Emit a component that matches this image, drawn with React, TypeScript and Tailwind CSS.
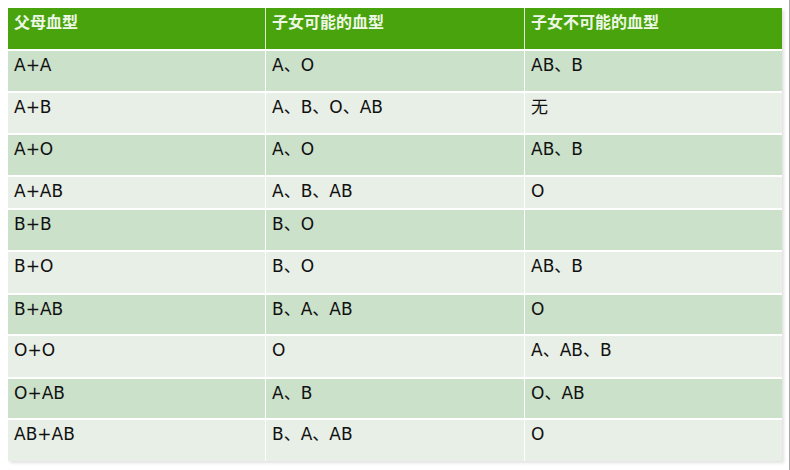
import React from 'react';

// Blood type inheritance table
const rows: [string, string, string][] = [
  ['A+A', 'A、O', 'AB、B'],
  ['A+B', 'A、B、O、AB', '无'],
  ['A+O', 'A、O', 'AB、B'],
  ['A+AB', 'A、B、AB', 'O'],
  ['B+B', 'B、O', ''],
  ['B+O', 'B、O', 'AB、B'],
  ['B+AB', 'B、A、AB', 'O'],
  ['O+O', 'O', 'A、AB、B'],
  ['O+AB', 'A、B', 'O、AB'],
  ['AB+AB', 'B、A、AB', 'O'],
];

const rowHeights = ['h-[40px]', 'h-[40px]', 'h-[40px]', 'h-[31px]', 'h-[40px]', 'h-[41px]', 'h-[39px]', 'h-[41px]', 'h-[39px]', 'h-[41px]'];

const App: React.FC = () => {
  return (
    <div className="w-[790px] h-[470px] bg-white border-r border-[#a8a8a8] pt-2 pl-2">
      <div className="w-[774px] flex flex-col gap-[2px] shadow-[2px_2px_3px_rgba(0,0,0,0.12)]">
        {/* Header */}
        <div className="grid grid-cols-[257px_258px_257px] gap-x-[1px] h-[41px] bg-[#dfe9da]">
          {['父母血型', '子女可能的血型', '子女不可能的血型'].map((h) => (
            <div key={h} className="bg-[#48a30c] text-[#eef7e6] text-[16px] leading-[20px] font-semibold pl-[6px] pt-[3px] font-['Noto_Sans_CJK_SC',sans-serif]">
              {h}
            </div>
          ))}
        </div>
        {rows.map((r, i) => (
          <div key={r[0]} className={`grid grid-cols-[257px_258px_257px] gap-x-[1px] bg-white ${rowHeights[i]}`}>
            {r.map((c, j) => (
              <div
                key={j}
                className={`${i % 2 === 0 ? 'bg-[#cbe1ca]' : 'bg-[#e8efe6]'} text-[#111] text-[17px] leading-[20px] pl-[6px] pt-[4px] font-['DejaVu_Sans','Noto_Sans_CJK_SC',sans-serif]`}
              >
                {c}
              </div>
            ))}
          </div>
        ))}
      </div>
    </div>
  );
};

export default App;
